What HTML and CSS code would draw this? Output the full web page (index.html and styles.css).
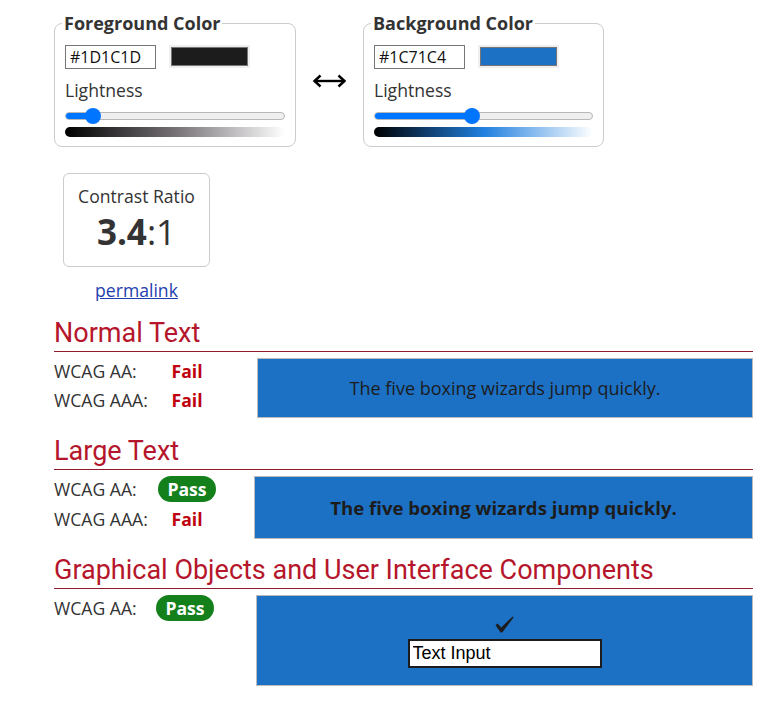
FILE: index.html
```html
<!DOCTYPE html>
<html lang="en">
<head>
<meta charset="utf-8">
<title>Contrast Checker</title>
<link rel="stylesheet" href="styles.css">
</head>
<body>
<main class="page">
  <div class="pickers">
    <fieldset class="picker">
      <legend class="picker-legend">Foreground Color</legend>
      <div class="picker-row">
        <input class="hex" type="text" value="#1D1C1D" aria-label="Foreground hex">
        <span class="swatch"><span class="swatch-fill swatch-fg"></span></span>
      </div>
      <label class="lightness-label">Lightness</label>
      <div class="slider">
        <div class="slider-track"><div class="slider-fill" style="width:13%"></div></div>
        <div class="slider-thumb" style="left:20px"></div>
      </div>
      <div class="gradient gradient-fg"></div>
    </fieldset>
    <div class="swap">
      <svg width="35" height="14" viewBox="0 0 35 14" aria-hidden="true">
        <path d="M2.5 7 H32.5" stroke="#000" stroke-width="2.4" fill="none"/>
        <path d="M8.5 1.5 L2.5 7 L8.5 12.5" stroke="#000" stroke-width="2.4" fill="none"/>
        <path d="M26.5 1.5 L32.5 7 L26.5 12.5" stroke="#000" stroke-width="2.4" fill="none"/>
      </svg>
    </div>
    <fieldset class="picker picker-bg">
      <legend class="picker-legend">Background Color</legend>
      <div class="picker-row">
        <input class="hex" type="text" value="#1C71C4" aria-label="Background hex">
        <span class="swatch"><span class="swatch-fill swatch-bg"></span></span>
      </div>
      <label class="lightness-label">Lightness</label>
      <div class="slider">
        <div class="slider-track"><div class="slider-fill" style="width:45%"></div></div>
        <div class="slider-thumb" style="left:90px"></div>
      </div>
      <div class="gradient gradient-bg"></div>
    </fieldset>
  </div>

  <div class="ratio-area">
    <div class="ratio-box">
      <div class="ratio-title">Contrast Ratio</div>
      <div class="ratio-value"><strong>3.4</strong>:1</div>
    </div>
    <div class="permalink-row"><a class="permalink" href="#">permalink</a></div>
  </div>

  <section class="result result-first">
    <h2 class="result-title">Normal Text</h2>
    <div class="result-body">
      <div class="levels levels-normal">
        <div class="level-row"><span class="level-label">WCAG AA:</span><span class="status fail">Fail</span></div>
        <div class="level-row"><span class="level-label">WCAG AAA:</span><span class="status fail">Fail</span></div>
      </div>
      <div class="sample sample-normal">The five boxing wizards jump quickly.</div>
    </div>
  </section>

  <section class="result">
    <h2 class="result-title">Large Text</h2>
    <div class="result-body">
      <div class="levels levels-large">
        <div class="level-row"><span class="level-label">WCAG AA:</span><span class="status pass">Pass</span></div>
        <div class="level-row"><span class="level-label">WCAG AAA:</span><span class="status fail">Fail</span></div>
      </div>
      <div class="sample sample-large">The five boxing wizards jump quickly.</div>
    </div>
  </section>

  <section class="result result-last">
    <h2 class="result-title">Graphical Objects and User Interface Components</h2>
    <div class="result-body">
      <div class="levels levels-graph">
        <div class="level-row"><span class="level-label level-label-narrow">WCAG AA:</span><span class="status pass">Pass</span></div>
      </div>
      <div class="sample sample-graph">
        <svg class="check" width="19" height="17" viewBox="0 0 19 17" aria-hidden="true">
          <path d="M0.5 9.2 L2.6 7.6 L6.2 11.6 L17.6 0.4 L18.6 1.4 L7.2 16.6 L5.6 16.6 Z" fill="#1D1C1D"/>
        </svg>
        <input class="text-input" type="text" value="Text Input" aria-label="Text Input">
      </div>
    </div>
  </section>
</main>
</body>
</html>
```

FILE: styles.css
```css
html, body {
  margin: 0;
  padding: 0;
  background: #fff;
}

body {
  font-family: "Open Sans", "DejaVu Sans", sans-serif;
  font-size: 17.6px;
  color: #333;
}

.page {
  width: 699px;
  padding: 11px 0 0 54px;
}

/* ---------- colour pickers ---------- */
.pickers {
  display: flex;
  align-items: center;
}

.picker {
  box-sizing: border-box;
  width: 242px;
  margin: 0;
  padding: 0 10px 9px;
  border: 1px solid #ccc;
  border-radius: 8px;
  min-width: 0;
}

.picker-bg {
  width: 241px;
}

.picker-legend {
  font-weight: 700;
  font-size: 18px;
  line-height: 24px;
  padding: 0 2px;
  margin-left: -3px;
  color: #333;
}

.picker-row {
  display: flex;
  gap: 13px;
  margin-top: 10px;
}

.hex {
  box-sizing: border-box;
  width: 91px;
  height: 24px;
  margin: 0;
  padding: 0 4px;
  border: 1px solid #767676;
  border-radius: 0;
  font-family: "Open Sans", sans-serif;
  font-size: 16px;
  color: #111;
  background: #fff;
}

.swatch {
  box-sizing: border-box;
  display: block;
  width: 81px;
  height: 23px;
  padding: 2px;
  background: #efefef;
}

.swatch-fill {
  box-sizing: border-box;
  display: block;
  width: 100%;
  height: 100%;
  border: 1px solid #767676;
}

.swatch-fg { background: #1D1C1D; }
.swatch-bg { background: #1C71C4; }

.lightness-label {
  display: block;
  margin-top: 9px;
  line-height: 24px;
  color: #333;
}

.slider {
  position: relative;
  height: 16px;
  margin-top: 6px;
}

.slider-track {
  box-sizing: border-box;
  position: relative;
  top: 4px;
  height: 8px;
  border-radius: 4px;
  background: #efefef;
  border: 1px solid #b8b8b8;
  overflow: hidden;
}

.slider-fill {
  height: 100%;
  background: #0075ff;
  margin: -1px 0 0 -1px;
  padding: 1px 0 1px 1px;
}

.slider-thumb {
  position: absolute;
  top: 0;
  width: 16px;
  height: 16px;
  border-radius: 50%;
  background: #0075ff;
}

.gradient {
  height: 10px;
  margin-top: 3px;
  border-radius: 5px;
}

.gradient-fg {
  background: linear-gradient(to right, #000, hsl(300, 2%, 45%), #fff);
}

.gradient-bg {
  background: linear-gradient(to right, #000, hsl(210, 75%, 50%), #fff);
}

.swap {
  width: 67px;
  display: flex;
  justify-content: center;
  margin-top: 4px;
}

/* ---------- contrast ratio ---------- */
.ratio-area {
  margin-left: 9px;
  width: 147px;
}

.ratio-box {
  box-sizing: border-box;
  width: 147px;
  height: 94px;
  margin-top: 26px;
  padding-top: 10px;
  border: 1px solid #ccc;
  border-radius: 6px;
  text-align: center;
}

.ratio-title {
  line-height: 24px;
}

.ratio-value {
  font-size: 35px;
  line-height: 46px;
  margin-top: 1px;
}

.ratio-value strong {
  font-weight: 700;
}

.permalink-row {
  text-align: center;
  margin-top: 11px;
  line-height: 24px;
}

.permalink {
  color: #1f3fae;
  text-decoration: underline;
}

/* ---------- results ---------- */
.result-title {
  font-family: Roboto, "Liberation Sans", sans-serif;
  font-weight: 400;
  font-size: 27px;
  line-height: 30px;
  color: #b5162b;
  margin: 18px 0 0;
  padding-bottom: 3px;
  border-bottom: 1px solid #8f1c2a;
}

.result-first .result-title {
  margin-top: 16px;
}

.result-last .result-title {
  margin-top: 16px;
}

.result-body {
  display: flex;
  align-items: flex-start;
  margin-top: 6px;
}

.levels {
  flex: none;
}

.levels-normal { width: 203px; }
.levels-large { width: 200px; }
.levels-graph { width: 202px; }

.level-row {
  display: flex;
  align-items: flex-start;
  min-height: 29px;
  line-height: 26px;
}

.level-label {
  width: 104px;
  flex: none;
  color: #333;
}

.level-label-narrow {
  width: 102px;
}

.status {
  width: 58px;
  text-align: center;
  font-weight: 700;
}

.fail {
  color: #c0000e;
}

.pass {
  height: 26px;
  line-height: 26px;
  background: #14801c;
  color: #fff;
  border-radius: 13px;
  margin-bottom: 4px;
}

.sample {
  flex: 1;
  box-sizing: border-box;
  border: 1px solid #bbb;
  background: #1C71C4;
  color: #1D1C1D;
  display: flex;
  align-items: center;
  justify-content: center;
}

.sample-normal {
  height: 60px;
  font-size: 18px;
}

.sample-large {
  height: 63px;
  font-weight: 700;
  font-size: 18.6px;
}

.sample-graph {
  height: 91px;
  flex-direction: column;
  gap: 6px;
  padding-top: 2px;
}

.check {
  display: block;
}

.text-input {
  box-sizing: border-box;
  width: 194px;
  height: 29px;
  margin: 0;
  padding: 0 3px;
  border: 2px solid #1D1C1D;
  border-radius: 0;
  background: #fff;
  color: #000;
  font-family: "Liberation Sans", Arial, sans-serif;
  font-size: 18px;
}
```
